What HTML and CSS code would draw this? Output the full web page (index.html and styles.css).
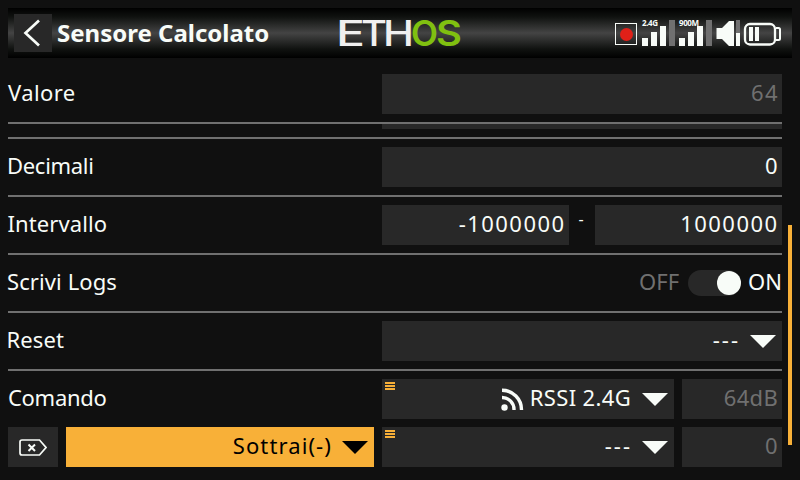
FILE: index.html
```html
<!DOCTYPE html>
<html lang="it">
<head>
<meta charset="utf-8">
<title>Sensore Calcolato</title>
<link rel="stylesheet" href="styles.css">
</head>
<body>
<header class="topbar">
  <button class="back" aria-label="Indietro"><svg width="38" height="38"><path d="M25 6.500L11.500 19L25 31.500" fill="none" stroke="#f8fcf8" stroke-width="2.700"/></svg></button>
  <h1 class="title">Sensore Calcolato</h1>
  <svg class="logo" width="130" height="50">
    <g class="logo-white">
      <text x="-1" y="38" textLength="29" lengthAdjust="spacingAndGlyphs">E</text>
      <text x="24" y="38" textLength="26" lengthAdjust="spacingAndGlyphs">T</text>
      <text x="46" y="38" textLength="31" lengthAdjust="spacingAndGlyphs">H</text>
    </g>
    <g class="logo-green">
      <text x="74" y="38" textLength="27" lengthAdjust="spacingAndGlyphs">O</text>
      <text x="99" y="38" textLength="26" lengthAdjust="spacingAndGlyphs">S</text>
    </g>
  </svg>
  <svg class="status" width="168" height="34" viewBox="614 16 168 34">
    <rect x="615.500" y="23.500" width="21" height="21" fill="none" stroke="#f8fcf8"/>
    <circle cx="626.500" cy="34.500" r="6.500" fill="#e02018"/>
    <text class="band" x="642" y="26" textLength="16">2.4G</text>
    <path fill="#f8fcf8" d="M642 38h6v8h-6zM651 32h6v14h-6zM660 26h6v20h-6z"/>
    <path fill="#707070" d="M669 20h6v26h-6zM706 20h6v26h-6zM736 20h4v13h-4z"/>
    <path fill="#f8fcf8" d="M679 38h6v8h-6zM688 32h6v14h-6zM697 26h6v20h-6z"/>
    <text class="band" x="679" y="26" textLength="20">900M</text>
    <path fill="#f8fcf8" d="M716.500 28h5.500l7-7h5v25h-5l-7-7h-5.500zM736 33h4v13h-4z"/>
    <rect x="745" y="24" width="30" height="20.500" rx="5" fill="none" stroke="#f8fcf8" stroke-width="2.300"/>
    <path d="M776 28h2.500q1.500 0 1.500 1.500v9q0 1.500-1.500 1.500H776" fill="none" stroke="#f8fcf8" stroke-width="2"/>
    <path fill="#f8fcf8" d="M749 27h4v14h-4zM755 27h4v14h-4z"/>
  </svg>
</header>
<main class="form">
  <div class="row first"><label class="w-valore">Valore</label><div class="field muted"><span>64</span></div></div>
  <div class="clipped"><div class="field"></div></div>
  <div class="row"><label class="w-decimali">Decimali</label><div class="field"><span>0</span></div></div>
  <div class="row"><label class="w-intervallo">Intervallo</label><div class="range"><div class="field"><span>-1000000</span></div><i class="dash">-</i><div class="field"><span>1000000</span></div></div></div>
  <div class="row"><label class="w-scrivi">Scrivi Logs</label><div class="toggle"><span class="off">OFF</span><b class="switch"></b><span class="on">ON</span></div></div>
  <div class="row"><label class="w-reset">Reset</label><div class="field select"><span class="none">---</span><svg width="26" height="13"><path d="M0 0H26L13 13Z"/></svg></div></div>
  <div class="row last"><label class="w-comando">Comando</label>
    <div class="source">
      <div class="field select"><svg class="menu" width="10" height="8"><path d="M0 0h10v2H0zM0 3h10v2H0zM0 6h10v2H0z"/></svg><svg class="rss" width="23" height="23"><circle cx="3.500" cy="19.500" r="3.200"/><path d="M1 9.500A12 12 0 0 1 13 22M1 2.200A19.500 19.500 0 0 1 20.500 22" fill="none" stroke="#f8fcf8" stroke-width="3.400"/></svg><span class="rssi">RSSI 2.4G</span><svg width="26" height="13"><path d="M0 0H26L13 13Z"/></svg></div>
      <div class="field muted"><span class="db">64dB</span></div>
    </div>
  </div>
  <div class="operation">
    <button class="field delete" aria-label="Elimina"><svg width="28" height="17"><path d="M3 1H20.500L27 8.500L20.500 16H3Q1 16 1 14V3Q1 1 3 1Z" fill="none" stroke="#f8fcf8" stroke-width="1.700"/><path d="M9.500 5.500L16 12M16 5.500L9.500 12" fill="none" stroke="#f8fcf8" stroke-width="2"/></svg></button>
    <div class="field select active"><span class="sottrai">Sottrai(-)</span><svg width="26" height="13"><path d="M0 0H26L13 13Z"/></svg></div>
    <div class="field select"><svg class="menu" width="10" height="8"><path d="M0 0h10v2H0zM0 3h10v2H0zM0 6h10v2H0z"/></svg><span class="none">---</span><svg width="26" height="13"><path d="M0 0H26L13 13Z"/></svg></div>
    <div class="field muted"><span>0</span></div>
  </div>
</main>
<div class="scrollbar"></div>
</body>
</html>
```
FILE: styles.css
```css
* { box-sizing: border-box; }
body {
  margin: 0; width: 800px; height: 480px; padding: 8px; overflow: hidden;
  position: relative; background: #101010; color: #f8fcf8;
  font: 22px/40px "Noto Sans", sans-serif;
}
svg { display: block; flex: none; }
.topbar {
  display: flex; align-items: center; height: 50px; padding: 0 10px 0 6px;
  background: linear-gradient(#000, #101210 18%, #444 50%, #101210 82%, #000);
}
.back { width: 38px; height: 38px; padding: 0; border: 0; background: #282828; }
.title { margin: 0 0 0 5px; width: 280px; font-size: 24px; font-weight: 700; line-height: 50px; white-space: nowrap; }
.logo text { font: 600 35px Inter, sans-serif; }
.logo .logo-white text { font-weight: 500; }
.logo-white { fill: #f0f0f0; }
.logo-green { fill: #80c010; }
.status { margin-left: auto; }
.band { font: 700 8px "Noto Sans", sans-serif; fill: #f8fcf8; }
.form { width: 774px; }
.row {
  display: grid; grid-template-columns: 374px 400px; align-items: center;
  height: 58px; border-bottom: 2px solid #707070;
}
.first { height: 66px; padding-top: 8px; }
.clipped { height: 15px; padding-left: 374px; border-bottom: 2px solid #707070; }
.clipped .field { height: 5px; }
.last { height: 56px; border: 0; }
.row label { height: 40px; line-height: 37px; white-space: nowrap; letter-spacing: .1px; }
.row .w-valore { letter-spacing: .4px; }
.row .w-decimali { margin-left: -1px; letter-spacing: -.3px; }
.row .w-intervallo { margin-left: -.5px; }
.row .w-scrivi { margin-left: -1px; }
.row .w-reset { margin-left: -1.500px; }
.row .w-comando { letter-spacing: -.3px; }
.field {
  position: relative; display: flex; justify-content: flex-end; align-items: center;
  height: 40px; padding: 0 3px 0 0; background: #282828; white-space: pre;
}
.field span { height: 40px; line-height: 37px; letter-spacing: 1.450px; }
.muted { color: #707070; }
.range { display: grid; grid-template-columns: 187px 26px 187px; }
.range .field { padding-right: 3.500px; }
.dash { font: normal 16px/29px "Noto Sans", sans-serif; text-align: center; padding-right: 2px; }
.toggle { display: flex; align-items: center; justify-content: flex-end; }
.toggle span { height: 40px; line-height: 37px; }
.off { color: #707070; }
.switch { width: 53px; height: 26px; margin: 0 7px 0 9px; padding: 1px 0 1px 1px; border-radius: 13px; background: #282828; }
.switch::after { content: ""; display: block; width: 24px; height: 24px; margin-left: auto; border-radius: 50%; background: #f8fcf8; }
.select { padding-right: 6px; fill: #f8fcf8; }
.select span { margin-right: 10px; }
.select .none { letter-spacing: 2px; margin-right: 10px; }
.source { display: grid; grid-template-columns: 292px 100px; gap: 8px; }
.menu { position: absolute; left: 3px; top: 3px; fill: #f8b038; }
.rss { margin-right: 6px; }
.select .rssi { letter-spacing: .35px; margin-right: 11px; }
.field .db { letter-spacing: .3px; margin-right: 1px; }
.select .sottrai { letter-spacing: 1.100px; }
.operation { display: grid; grid-template-columns: 50px 308px 292px 100px; gap: 8px; }
.delete { justify-content: center; padding: 0 1px 0 0; border: 0; }
.active { background: #f8b038; color: #000; fill: #000; }
.scrollbar { position: absolute; left: 788px; top: 225px; width: 4px; height: 220px; background: #f8b038; }
```
